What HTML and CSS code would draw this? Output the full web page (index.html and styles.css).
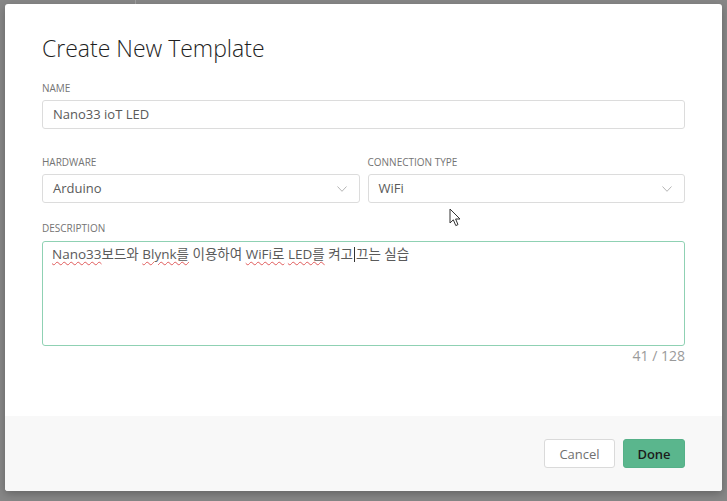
FILE: index.html
```html
<!DOCTYPE html>
<html lang="ko">
<head>
    <meta charset="UTF-8">
    <title>Create New Template</title>
    <link rel="stylesheet" href="styles.css">
</head>
<body>
    <div class="backdrop-line"></div>

    <div class="modal">
        <div class="modal-body">
            <h2 class="modal-title">Create New Template</h2>

            <div class="field field-name">
                <label>NAME</label>
                <div class="input">Nano33 ioT LED</div>
            </div>

            <div class="field-row">
                <div class="field">
                    <label>HARDWARE</label>
                    <div class="input select">
                        <span>Arduino</span>
                        <svg class="chevron" width="10" height="6" viewBox="0 0 10 6"><path d="M0.5 0.5 L5 5.3 L9.5 0.5" fill="none" stroke="#b5b5b5" stroke-width="1"/></svg>
                    </div>
                </div>
                <div class="field">
                    <label>CONNECTION TYPE</label>
                    <div class="input select">
                        <span>WiFi</span>
                        <svg class="chevron" width="10" height="6" viewBox="0 0 10 6"><path d="M0.5 0.5 L5 5.3 L9.5 0.5" fill="none" stroke="#b5b5b5" stroke-width="1"/></svg>
                    </div>
                </div>
            </div>

            <div class="field field-desc">
                <label>DESCRIPTION</label>
                <div class="textarea"><span class="typo">Nano33</span>보드와 <span class="typo">Blynk를</span> 이용하여 <span class="typo">WiFi로</span> <span class="typo">LED를</span> 켜고<span class="caret"></span>끄는 실습</div>
                <div class="counter">41 / 128</div>
            </div>
        </div>

        <div class="modal-footer">
            <button class="btn btn-cancel">Cancel</button>
            <button class="btn btn-done">Done</button>
        </div>
    </div>

    <svg class="pointer" width="13" height="20" viewBox="0 0 13 20">
        <path d="M1 1 L1 15 L4.3 11.8 L6.8 17.6 L9 16.6 L6.6 11 L11 11 Z" fill="#fff" stroke="#333" stroke-width="1" stroke-linejoin="round"/>
    </svg>
</body>
</html>
```

FILE: styles.css
```css
html, body {
    margin: 0;
    padding: 0;
}
body {
    width: 727px;
    height: 501px;
    background-color: #878787;
    font-family: "Open Sans", "Noto Sans CJK KR", sans-serif;
    position: relative;
    overflow: hidden;
}
.backdrop-line {
    position: absolute;
    left: 135px;
    top: 0;
    width: 1px;
    height: 4px;
    background-color: #9a9a9a;
}
.modal {
    margin: 4px 0 0 5px;
    width: 717px;
    height: 487px;
    background-color: #fff;
    border-radius: 3px;
    box-shadow: 0 3px 8px rgba(0,0,0,0.25);
    display: flex;
    flex-direction: column;
    overflow: hidden;
}
.modal-body {
    height: 412px;
    padding: 29px 37px 0 37px;
    box-sizing: border-box;
}
.modal-title {
    margin: 0;
    font-size: 23px;
    line-height: 30px;
    font-weight: 300;
    color: #1e1e1e;
}
.field label {
    display: block;
    font-size: 10px;
    line-height: 14px;
    color: #747474;
    margin-bottom: 5px;
}
.field-name {
    margin-top: 18px;
}
.field-row {
    display: flex;
    gap: 8px;
    margin-top: 26px;
}
.field-row .field {
    flex: 1;
}
.input {
    height: 29px;
    box-sizing: border-box;
    border: 1px solid #dcdcdc;
    border-radius: 3px;
    padding: 0 10px;
    font-size: 13px;
    line-height: 27px;
    color: #5a5a5a;
}
.select {
    display: flex;
    justify-content: space-between;
    align-items: center;
}
.chevron {
    margin-right: 2px;
}
.field-desc {
    margin-top: 18px;
}
.field-desc label {
    margin-bottom: 6px;
}
.textarea {
    height: 105px;
    box-sizing: border-box;
    border: 1px solid #8fd1b3;
    border-radius: 3px;
    padding: 3px 9px;
    font-size: 13.5px;
    line-height: 18px;
    color: #5a5a5a;
}
.typo {
    text-decoration: underline wavy #e05a5a;
    text-decoration-thickness: 1px;
    text-underline-offset: 2px;
}
.caret {
    display: inline-block;
    width: 1px;
    height: 15px;
    background-color: #333;
    vertical-align: -3px;
    margin: 0 1px;
}
.counter {
    margin-top: 3px;
    text-align: right;
    font-size: 14px;
    line-height: 14px;
    color: #9a9a9a;
}
.modal-footer {
    flex: 1;
    background-color: #f8f8f8;
    display: flex;
    justify-content: flex-end;
    align-items: flex-start;
    gap: 8px;
    padding: 23px 37px 0 0;
}
.btn {
    height: 29px;
    border-radius: 3px;
    font-family: "Open Sans", sans-serif;
    font-size: 13px;
    padding: 0;
    cursor: pointer;
}
.btn-cancel {
    width: 71px;
    background-color: #fff;
    border: 1px solid #dadada;
    color: #707070;
}
.btn-done {
    width: 62px;
    background-color: #5ab68d;
    border: 1px solid #55b088;
    color: #1c1c1c;
    font-weight: 600;
}
.pointer {
    position: absolute;
    left: 449px;
    top: 208px;
}
```
